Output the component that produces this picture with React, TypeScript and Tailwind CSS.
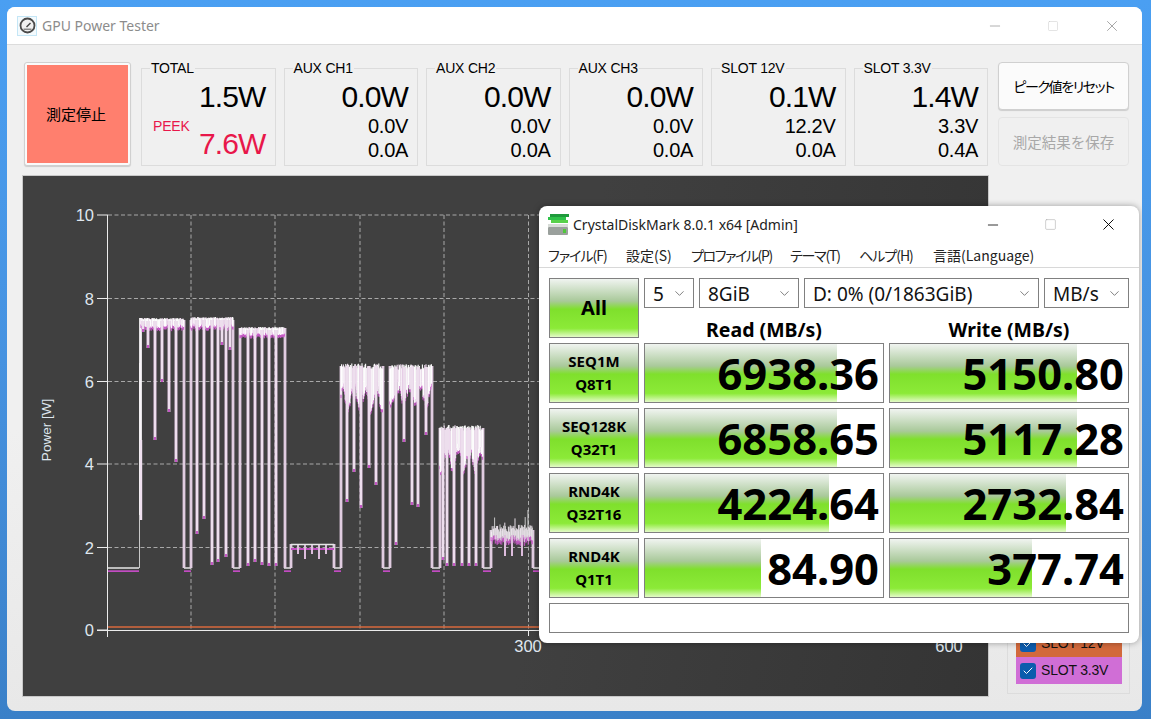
import { Check, ChevronDown, Minus, Square, X } from "lucide-react";

const channels = [
  { name: "AUX CH1", watt: "0.0W", volt: "0.0V", amp: "0.0A" },
  { name: "AUX CH2", watt: "0.0W", volt: "0.0V", amp: "0.0A" },
  { name: "AUX CH3", watt: "0.0W", volt: "0.0V", amp: "0.0A" },
  { name: "SLOT 12V", watt: "0.1W", volt: "12.2V", amp: "0.0A" },
  { name: "SLOT 3.3V", watt: "1.4W", volt: "3.3V", amp: "0.4A" },
];

const results = [
  { a: "SEQ1M", b: "Q8T1", read: "6938.36", readW: 192, write: "5150.80", writeW: 187 },
  { a: "SEQ128K", b: "Q32T1", read: "6858.65", readW: 192, write: "5117.28", writeW: 187 },
  { a: "RND4K", b: "Q32T16", read: "4224.64", readW: 184, write: "2732.84", writeW: 176 },
  { a: "RND4K", b: "Q1T1", read: "84.90", readW: 116, write: "377.74", writeW: 142 },
];

// x0, x1, top y, band depth, dips [x, y]
const blocks: { x0: number; x1: number; top: number; band: number; noise: number; dips: number[][] }[] = [
  { x0: 141, x1: 184, top: 318, band: 6, noise: 0.3, dips: [[143, 332], [148, 348], [155, 440], [162, 382], [169, 412], [176, 462]] },
  { x0: 191, x1: 233, top: 317, band: 7, noise: 0.4, dips: [[197, 534], [204, 519], [212, 565], [218, 562], [226, 557], [222, 345], [230, 350]] },
  { x0: 240, x1: 285, top: 327, band: 5, noise: 0.2, dips: [[248, 566], [255, 562], [262, 565], [269, 566], [276, 566]] },
  { x0: 341, x1: 383, top: 363, band: 42, noise: 1, dips: [[347, 502], [354, 472], [361, 508], [369, 468], [376, 485]] },
  { x0: 390, x1: 432, top: 364, band: 36, noise: 1, dips: [[396, 545], [404, 442], [412, 505], [418, 507], [426, 435]] },
  { x0: 440, x1: 483, top: 425, band: 40, noise: 1, dips: [[443, 560], [447, 566], [454, 566], [462, 566], [469, 566], [476, 566]] },
];

function rand(seed: number) {
  const v = Math.sin(seed * 127.1) * 43758.5453;
  return v - Math.floor(v);
}

function Spike({ x, y0, y1 }: { x: number; y0: number; y1: number }) {
  return (
    <g>
      <line x1={x} x2={x} y1={y0} y2={y1} stroke="#dcc0dc" strokeWidth={3} />
      <line x1={x} x2={x} y1={y0} y2={y1 - 3} stroke="#f8f2f8" strokeWidth={1.2} />
      <line x1={x} x2={x} y1={y1 - 3} y2={y1} stroke="#c24cc2" strokeWidth={1.8} />
    </g>
  );
}

function PowerLine() {
  const idle = (x0: number, x1: number) => (
    <g key={x0}>
      <line x1={x0} x2={x1} y1={571.5} y2={571.5} stroke="#c24cc2" strokeWidth={2.4} />
      <line x1={x0} x2={x1} y1={568} y2={568} stroke="#dcdcdc" strokeWidth={1.6} />
    </g>
  );
  return (
    <g filter="url(#soft)">
      {[[108, 139], [184, 191], [233, 240], [284, 291], [334, 341], [383, 390], [432, 440], [483, 491], [533, 540]].map(([a, b]) => idle(a, b))}
      <line x1={139.5} x2={139.5} y1={568} y2={363} stroke="#c8c8c8" strokeWidth={1} />
      <line x1={140.5} x2={140.5} y1={515} y2={318} stroke="#f8f4f8" strokeWidth={2.8} />
      <line x1={141} x2={141} y1={440} y2={520} stroke="#f0e0f0" strokeWidth={2.4} />
      {[184, 191, 233, 240, 285, 291, 334, 341, 383, 390, 432, 440, 483, 491, 533].map((x) => (
        <line key={x} x1={x} x2={x} y1={x === 291 || x === 334 ? 544 : x === 491 || x === 533 ? 530 : x < 240 ? 320 : x <= 285 ? 328 : x <= 432 ? 366 : 428} y2={568} stroke="#e0cce0" strokeWidth={2.8} />
      ))}
      <line x1={291} x2={334} y1={549} y2={549} stroke="#c24cc2" strokeWidth={2} />
      <line x1={291} x2={334} y1={544.5} y2={544.5} stroke="#e6e6e6" strokeWidth={1.4} />
      {[298, 305, 312, 319, 326].map((x, i) => (
        <line key={x} x1={x} x2={x} y1={545} y2={554 + (i % 2) * 5} stroke="#dcbcdc" strokeWidth={2} />
      ))}
      {blocks.map((b) => {
        const tips = [];
        const cols = [];
        const loud = b.noise > 0.5;
        for (let x = b.x0; x <= b.x1; x += 0.6) {
          const r = rand(x + b.top);
          const wave = 0.5 + 0.5 * Math.sin(x * 0.55 + b.top);
          const up = b.top + rand(x * 3) * (loud ? 6 : 1.5);
          const depth = up + 3 + b.band * (loud ? 0.3 + wave * 0.45 + r * 0.25 : 0.4 + r * 0.6);
          tips.push(<line key={x} x1={x} x2={x} y1={depth - 1} y2={depth + 3} stroke="#cc5ccc" strokeWidth={1} />);
          cols.push(<line key={x} x1={x} x2={x} y1={up} y2={depth} stroke={r > 0.3 ? "#ffffff" : "#f0dcf0"} strokeWidth={1.1} />);
        }
        return (
          <g key={b.x0}>
            {tips}
            {cols}
            {b.dips.map(([x, y]) => (
              <Spike key={x} x={x} y0={b.top + 3} y1={y} />
            ))}
          </g>
        );
      })}
      {Array.from({ length: 70 }, (_, i) => {
        const x = 491 + i * 0.6;
        const up = 532 - rand(i + 9) * 8 - (i % 17 === 6 ? 7 : 0);
        const low = 535 + rand(i + 31) * 7;
        return (
          <g key={x}>
            <line x1={x} x2={x} y1={low} y2={low + 4} stroke="#cc5ccc" strokeWidth={0.9} />
            <line x1={x} x2={x} y1={up} y2={low} stroke={i % 3 ? "#f8eef8" : "#d8d8d8"} strokeWidth={0.9} />
          </g>
        );
      })}
      <line x1={528} x2={528} y1={510} y2={540} stroke="#d8d8d8" strokeWidth={1} />
      {[505, 512, 522].map((x) => (
        <line key={x} x1={x} x2={x} y1={535} y2={556} stroke="#dcbcdc" strokeWidth={2} />
      ))}
    </g>
  );
}

function PowerChart() {
  const ticks = [
    { y: 215, v: "10" },
    { y: 298.5, v: "8" },
    { y: 381.5, v: "6" },
    { y: 464, v: "4" },
    { y: 547.5, v: "2" },
    { y: 630, v: "0" },
  ];
  const grid = [191, 275, 360, 444, 528.5, 612, 696, 780, 864, 949];
  return (
    <svg viewBox="23 176 965 520" className="block h-[520px] w-[965px]">
      <defs>
        <filter id="soft" x="0" y="0" width="100%" height="100%">
          <feGaussianBlur stdDeviation="0.45" />
        </filter>
      </defs>
      <g stroke="#a8a8a8" strokeWidth={1} strokeDasharray="4 2.5">
        {ticks.slice(0, 5).map((t) => (
          <line key={t.y} x1={108} x2={949} y1={t.y} y2={t.y} />
        ))}
        {grid.map((x) => (
          <line key={x} x1={x} x2={x} y1={215} y2={630} />
        ))}
      </g>
      <PowerLine />
      <line x1={108} x2={949} y1={627} y2={627} stroke="#d8693c" strokeWidth={1.6} />
      <g stroke="#ececec" strokeWidth={1}>
        <line x1={107.5} x2={107.5} y1={215} y2={637} />
        <line x1={97} x2={949} y1={630.5} y2={630.5} />
        {ticks.map((t) => (
          <line key={t.v} x1={97} x2={108} y1={t.y} y2={t.y} />
        ))}
        <line x1={528.5} x2={528.5} y1={630} y2={636} />
        <line x1={949} x2={949} y1={630} y2={636} />
      </g>
      <g fill="#dfe6ee" fontFamily="'Liberation Sans', sans-serif" fontSize={16.5}>
        {ticks.map((t) => (
          <text key={t.v} x={94} y={t.y + 6} textAnchor="end">
            {t.v}
          </text>
        ))}
        <text x={528} y={652} textAnchor="middle">300</text>
        <text x={949} y={652} textAnchor="middle">600</text>
        <text x={0} y={0} fontSize={13.5} textAnchor="middle" transform="translate(51 430) rotate(-90)">Power [W]</text>
      </g>
    </svg>
  );
}

function GroupBox({ label, children }: { label: string; children: React.ReactNode }) {
  return (
    <div className="relative h-[98px] border border-[#dcdcdc] pr-[9px] text-right text-black">
      <span className="absolute left-[8px] top-[-9px] bg-[#f0f0f0] px-px text-[14px] leading-[16px] tracking-[-0.2px] text-left">{label}</span>
      {children}
    </div>
  );
}

function Meter({ name, watt, volt, amp }: { name: string; watt: string; volt: string; amp: string }) {
  return (
    <GroupBox label={name}>
      <div className="mt-[10px] text-[30px] leading-[36px] tracking-[-0.9px]">{watt}</div>
      <div className="mt-[-1px] text-[20px] leading-[24px] tracking-[-0.3px]">{volt}</div>
      <div className="text-[20px] leading-[24px] tracking-[-0.3px]">{amp}</div>
    </GroupBox>
  );
}

function GreenCell({ fill, label }: { fill: number; label: string }) {
  return (
    <div className="relative h-[60px] border border-[#808080] bg-white">
      <div
        className="h-full bg-[linear-gradient(180deg,#f0f4f0_0%,#a9c99a_38%,#7fe02c_52%,#8cea38_85%,#e4fbc8_100%)]"
        style={{ width: fill }}
      />
      <span className="absolute inset-y-0 right-[4px] flex items-center pt-[2px] text-[43.5px] font-bold leading-none text-black">{label}</span>
    </div>
  );
}

function LabelCell({ children, className }: { children: React.ReactNode; className?: string }) {
  return (
    <div className={`flex flex-col items-center justify-center border border-[#808080] bg-[linear-gradient(180deg,#f0f4f0_0%,#a9c99a_38%,#7fe02c_52%,#8cea38_85%,#e4fbc8_100%)] font-bold text-black ${className}`}>
      {children}
    </div>
  );
}

function Combo({ value, className }: { value: string; className: string }) {
  return (
    <div className={`flex h-[30px] items-center justify-between border border-[#808080] bg-white pl-2 pr-[6px] text-[19px] leading-none text-[#111] ${className}`}>
      <span className="pt-[2px]">{value}</span>
      <ChevronDown size={15} strokeWidth={1.2} className="text-[#555]" />
    </div>
  );
}

function CrystalDiskMark() {
  return (
    <div className="absolute left-[532px] top-[199px] h-[437px] w-[600px] overflow-hidden rounded-lg bg-white font-['Noto_Sans',sans-serif] shadow-[0_0_6px_rgba(0,0,0,0.35)]">
      <div className="flex h-[37px] items-center pl-[9px] text-[14px] text-[#222]">
        <svg width="21" height="21" viewBox="0 0 21 21">
          <rect x="2" y="0" width="19" height="3" fill="#1f9a3c" />
          <rect x="0" y="3" width="18" height="3" fill="#2fc24a" />
          <rect x="3" y="6" width="17" height="3" fill="#57d04a" />
          <rect x="0" y="10" width="20" height="3" fill="#d8dcd8" />
          <rect x="0" y="13" width="20" height="8" rx="1" fill="#9aa09c" />
          <rect x="15" y="15" width="3" height="4" fill="#4fc83a" />
        </svg>
        <span className="ml-[4px]">CrystalDiskMark 8.0.1 x64 [Admin]</span>
        <div className="ml-auto flex items-center pr-[21px] text-black">
          <Minus size={16} strokeWidth={1.2} />
          <Square size={13} strokeWidth={1} className="ml-[43px] text-[#aaa]" />
          <X size={19} strokeWidth={1.2} className="ml-[42px]" />
        </div>
      </div>
      <div className="flex h-[25px] items-center border-b border-[#d8d8d8] pl-[9px] font-['Noto_Sans_CJK_JP',sans-serif] text-[14px] text-[#222] [font-feature-settings:'palt']">
        <span className="w-[78px] tracking-[-1px]">ファイル(F)</span>
        <span className="w-[65px]">設定(S)</span>
        <span className="w-[99px] tracking-[-1.4px]">プロファイル(P)</span>
        <span className="w-[69px] tracking-[-1.2px]">テーマ(T)</span>
        <span className="w-[74px] tracking-[-1px]">ヘルプ(H)</span>
        <span>言語(Language)</span>
      </div>
      <div className="grid grid-cols-[90px_240px_240px] gap-[5px] pl-[10px] pt-[10px]">
        <LabelCell className="row-span-2 text-[20px]">All</LabelCell>
        <div className="col-span-2 flex gap-[5px]">
          <Combo value="5" className="w-[50px]" />
          <Combo value="8GiB" className="w-[100px]" />
          <Combo value="D: 0% (0/1863GiB)" className="w-[235px]" />
          <Combo value="MB/s" className="w-[85px]" />
        </div>
        <div className="h-[25px] pt-[3px] text-center text-[19.5px] font-bold leading-[28px] text-black">Read (MB/s)</div>
        <div className="h-[25px] pt-[3px] text-center text-[19.5px] font-bold leading-[28px] text-black">Write (MB/s)</div>
        {results.map((r) => (
          <div key={r.b} className="contents">
            <LabelCell className="h-[60px] gap-[3px] pb-[2px] text-[15px] leading-[20px]">
              <span>{r.a}</span>
              <span>{r.b}</span>
            </LabelCell>
            <GreenCell fill={r.readW} label={r.read} />
            <GreenCell fill={r.writeW} label={r.write} />
          </div>
        ))}
        <div className="col-span-3 h-[30px] border border-[#808080] bg-white" />
      </div>
    </div>
  );
}

function SeriesRow({ label, className }: { label: string; className: string }) {
  return (
    <div className={`flex h-[27px] items-center gap-[5px] pl-1 text-[14px] tracking-[-0.2px] text-[#111] ${className}`}>
      <span className="flex h-[16px] w-[16px] items-center justify-center rounded-[3px] bg-[#0b5cad] text-white">
        <Check size={12} strokeWidth={2} />
      </span>
      {label}
    </div>
  );
}

export default function App() {
  return (
    <div className="h-[719px] w-[1151px] overflow-hidden bg-[linear-gradient(180deg,#4a9ff2_0%,#4692e0_50%,#3a80c8_100%)] pl-[7px] pt-[7px] font-['Liberation_Sans',sans-serif]">
      <div className="relative h-[704px] w-[1135px] overflow-hidden rounded-lg bg-[linear-gradient(180deg,#f0f0f0_0%,#f0f0f0_60%,#e8e8e8_100%)]">
        <div className="flex h-[38px] items-center border-b border-[#dcdcdc] bg-white pl-[10px]">
          <span className="flex h-[20px] w-[20px] items-center justify-center border border-[#c4e6f6] bg-[#f4fafd]">
            <svg width="17" height="17" viewBox="0 0 17 17" fill="none">
              <circle cx="8.5" cy="8.5" r="7" stroke="#4a4a4a" strokeWidth="1.8" fill="#f0f0f0" />
              <path d="M7.5 10 L11.5 6" stroke="#444" strokeWidth="1.4" />
              <path d="M4.5 12.2 H12.5" stroke="#8a8a8a" strokeWidth="1.6" />
            </svg>
          </span>
          <span className="ml-[5px] font-['Noto_Sans',sans-serif] text-[14px] text-[#8c8c8c]">GPU Power Tester</span>
          <div className="ml-auto flex items-center pr-[21px] text-[#8a8a8a]">
            <Minus size={16} strokeWidth={1} />
            <Square size={12} strokeWidth={1} className="ml-[44px] text-[#c8c8c8]" />
            <X size={18} strokeWidth={1} className="ml-[44px]" />
          </div>
        </div>

        <div className="flex pl-[17px] pt-[17px]">
          <button className="h-[104px] w-[107px] rounded-[3px] border border-[#d0d0d0] bg-[#fafafa] p-[2px] shadow-[0_1px_1px_rgba(0,0,0,0.15)]">
            <span className="flex h-full w-full items-center justify-center bg-[#ff7f6e] pr-[3px] font-['Noto_Sans_CJK_JP',sans-serif] text-[15px] text-black">測定停止</span>
          </button>
          <div className="ml-[10px] mt-[6px] grid h-[98px] w-[847px] grid-cols-6 gap-[8px]">
            <GroupBox label="TOTAL">
              <div className="mt-[10px] text-[30px] leading-[36px] tracking-[-0.9px]">1.5W</div>
              <div className="flex items-start justify-between pl-[11px] text-[#e8174a]">
                <span className="mt-[1px] text-[14px] tracking-[-0.2px]">PEEK</span>
                <span className="mt-[11px] text-[30px] leading-[36px] tracking-[-0.9px]">7.6W</span>
              </div>
            </GroupBox>
            {channels.map((c) => (
              <Meter key={c.name} {...c} />
            ))}
          </div>
          <div className="ml-[10px] flex w-[131px] flex-col gap-[7px]">
            <button className="h-[48px] rounded-[4px] border border-[#d0d0d0] bg-[#fbfbfb] font-['Noto_Sans_CJK_JP',sans-serif] text-[14px] tracking-[-1.4px] text-black [font-feature-settings:'palt'] shadow-[0_1px_1px_rgba(0,0,0,0.15)]">ピーク値をリセット</button>
            <button className="h-[49px] rounded-[4px] border border-[#e4e4e4] bg-[#f0f0f0] font-['Noto_Sans_CJK_JP',sans-serif] text-[14.5px] text-[#a8a8a8]">測定結果を保存</button>
          </div>
        </div>

        <div className="flex pl-[16px] pt-[10px]">
          <div className="h-[520px] w-[965px] bg-[linear-gradient(100deg,#404040_0%,#404040_55%,#343434_100%)] shadow-[0_0_0_1px_#c8c8c8]">
            <PowerChart />
          </div>
          <div className="ml-[19px] flex h-[518px] w-[123px] flex-col justify-end">
            <div className="border border-[#dcdcdc] pb-[9px] pl-[8px] pr-[7px] pt-[8px]">
              <SeriesRow label="SLOT 12V" className="bg-[#d2693c]" />
              <SeriesRow label="SLOT 3.3V" className="bg-[#d06ed6]" />
            </div>
          </div>
        </div>

        <CrystalDiskMark />
      </div>
    </div>
  );
}
